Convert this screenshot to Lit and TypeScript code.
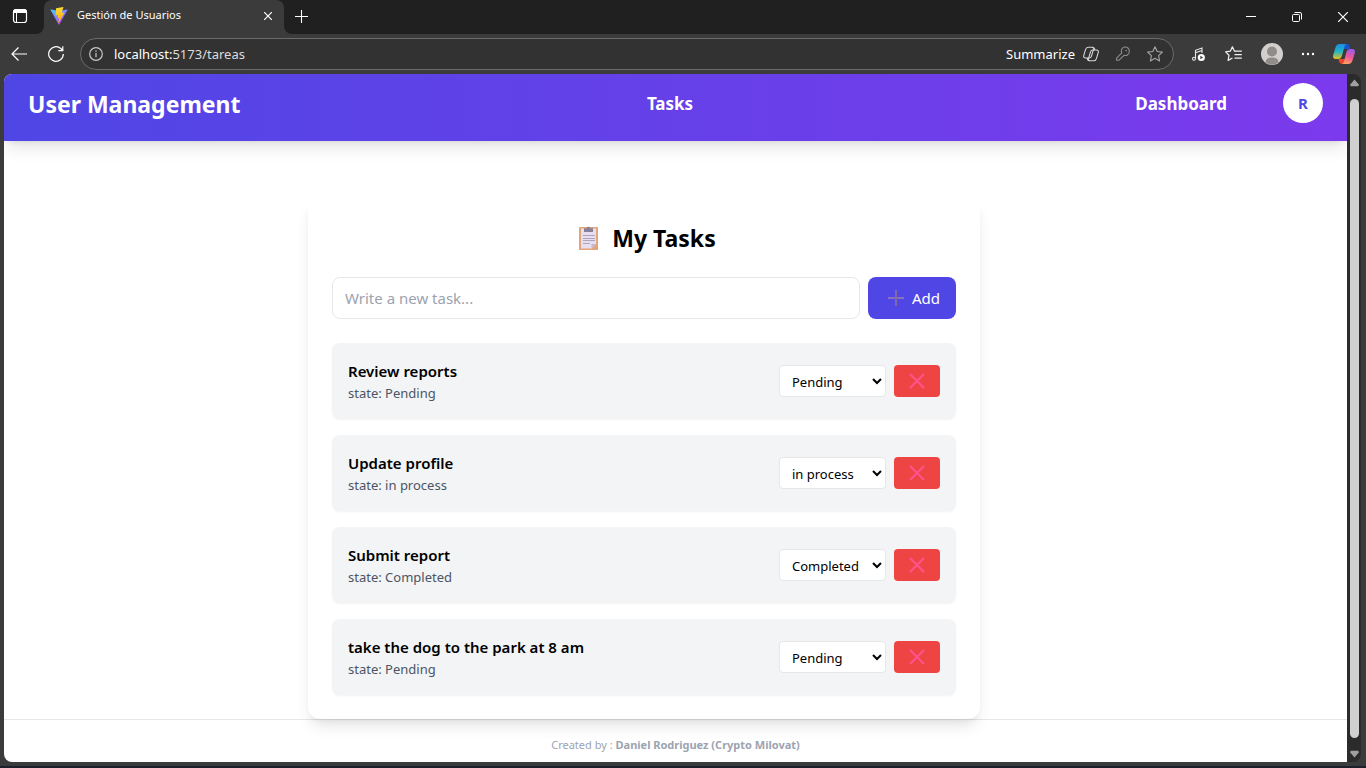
import { LitElement, html, svg, css } from "lit";
import { customElement, state } from "lit/decorators.js";

interface Task {
  id: number;
  title: string;
  status: string;
}

const STATUSES = ["Pending", "in process", "Completed"];

@customElement("browser-tabs")
class BrowserTabs extends LitElement {
  static styles = css`
    :host {
      display: flex;
      height: 34px;
      background: #202020;
      color: #fff;
      font-family: "Noto Sans", "Open Sans", sans-serif;
    }
    button {
      display: flex;
      align-items: center;
      justify-content: center;
      padding: 0;
      border: 0;
      background: none;
      color: inherit;
      font: inherit;
    }
    svg {
      display: block;
      flex: none;
    }
    .actions {
      width: 44px;
      padding: 0 4px 2px 0;
      box-sizing: border-box;
      border-radius: 0 0 8px 0;
    }
    .left,
    .right {
      display: flex;
      background: #3b3b3b;
    }
    .left .actions {
      background: #202020;
    }
    .tab {
      display: flex;
      align-items: center;
      width: 240px;
      padding: 0 8px 2px 6px;
      box-sizing: border-box;
      gap: 9px;
      background: #3b3b3b;
      border-radius: 8px 8px 0 0;
      font-size: 11px;
    }
    .corner {
      background: #202020;
      display: flex;
    }
    .title {
      flex: 1;
      line-height: 16px;
      padding-bottom: 2px;
    }
    .close {
      width: 16px;
      height: 16px;
    }
    .right {
      flex: 1;
    }
    .rest {
      flex: 1;
      display: flex;
      align-items: stretch;
      background: #202020;
      border-radius: 0 0 0 8px;
    }
    .new {
      width: 34px;
      padding-bottom: 2px;
    }
    .drag {
      flex: 1;
    }
    .win {
      width: 46px;
    }
  `;

  render() {
    return html`
      <div class="left">
        <button class="actions" aria-label="Tab actions">
          <svg width="16" height="16" viewBox="0 0 16 16" fill="none" stroke="#fff">
            <rect x="1.5" y="1.5" width="13" height="13" rx="2.5" stroke-width="1.2" />
            <path d="M1.5 4.5V4a2.5 2.5 0 0 1 2.5-2.5h8A2.5 2.5 0 0 1 14.5 4v.5z" fill="#fff" />
            <path d="M4.5 4.5v10" />
          </svg>
        </button>
      </div>
      <div class="corner">
        <div class="tab">
          <svg width="18" height="18" viewBox="0 0 32 32">
            <defs>
              <linearGradient id="a" x1="0" y1="0" x2=".7" y2="1">
                <stop stop-color="#41d1ff" />
                <stop offset="1" stop-color="#bd34fe" />
              </linearGradient>
              <linearGradient id="b" x1="0" y1="0" x2="0" y2="1">
                <stop stop-color="#ffdd35" />
                <stop offset="1" stop-color="#ffa800" />
              </linearGradient>
            </defs>
            <path d="M31 5.5 16.7 31a.8.8 0 0 1-1.400 0L1 5.5a.8.8 0 0 1 .8-1.2L16 6.9l14.2-2.600a.8.8 0 0 1 .8 1.200z" fill="url(#a)" />
            <path d="M23.500 0 11 2.400a.4.4 0 0 0-.3.4l-.9 12c0 .3.2.5.5.4l3.500-.8c.3 0 .5.2.4.5l-1.100 5c0 .3.2.5.5.4l2.200-.6c.3 0 .5.2.5.5l-1.700 7.800c-.1.4.5.6.7.3L25.500 10.200a.4.4 0 0 0-.4-.6l-3.700.7a.4.4 0 0 1-.4-.5L23.900.5a.4.4 0 0 0-.4-.5z" fill="url(#b)" />
          </svg>
          <span class="title">Gestión de Usuarios</span>
          <button class="close" aria-label="Close tab">
            <svg width="8" height="8" viewBox="0 0 8 8" stroke="#fff" stroke-width="1.2">
              <path d="M0 0l8 8M8 0L0 8" />
            </svg>
          </button>
        </div>
      </div>
      <div class="right">
        <div class="rest">
          <button class="new" aria-label="New tab">
            <svg width="13" height="13" viewBox="0 0 13 13" stroke="#fff" stroke-width="1.1">
              <path d="M6.5 0v13M0 6.5h13" />
            </svg>
          </button>
          <span class="drag"></span>
          <button class="win" aria-label="Minimize">
            <svg width="10" height="10" stroke="#fff"><path d="M0 4.5h10" /></svg>
          </button>
          <button class="win" aria-label="Restore">
            <svg width="10" height="10" viewBox="0 0 10 10" fill="none" stroke="#fff">
              <rect x=".5" y="2.5" width="7" height="7" rx="1" />
              <path d="M2.5.5H8A1.5 1.5 0 0 1 9.5 2v5.5" />
            </svg>
          </button>
          <button class="win" aria-label="Close window">
            <svg width="10" height="10" viewBox="0 0 10 10" stroke="#fff" stroke-width="1.2">
              <path d="M0 0l10 10M10 0L0 10" />
            </svg>
          </button>
        </div>
      </div>
    `;
  }
}

@customElement("browser-toolbar")
class BrowserToolbar extends LitElement {
  static styles = css`
    :host {
      display: flex;
      align-items: center;
      height: 40px;
      background: #3b3b3b;
      color: #fff;
      font-family: "Noto Sans", "Open Sans", sans-serif;
      font-size: 13px;
    }
    button {
      display: flex;
      align-items: center;
      justify-content: center;
      padding: 0;
      border: 0;
      background: none;
      color: inherit;
      font: inherit;
    }
    svg {
      display: block;
      flex: none;
    }
    .nav {
      width: 36px;
    }
    .nav:first-child {
      width: 38px;
    }
    .bar {
      flex: 1;
      display: flex;
      align-items: center;
      height: 32px;
      margin-left: 6px;
      padding: 0 10px 0 8px;
      box-sizing: border-box;
      border: 1px solid #6b6b6b;
      border-radius: 16px;
      background: #323232;
    }
    .url {
      flex: 1;
      padding-left: 11px;
      color: #dcdcdc;
    }
    .host {
      color: #fff;
    }
    .summarize {
      gap: 8px;
    }
    .tools {
      display: flex;
      gap: 16px;
    }
    .side {
      display: flex;
      align-items: center;
      justify-content: space-between;
      width: 192px;
      padding: 0 11px 0 17px;
      box-sizing: border-box;
    }
  `;

  private copilotLine() {
    return svg`<g fill="none" stroke="#d6d6d6" stroke-width="1.1" stroke-linejoin="round">
      <path d="M5.2 1.2h4.300c1 0 1.400.7 1.100 1.800L8.400 10.300c-.4 1.200-1 1.700-2.200 1.700H2.600C.9 12 .3 10.900.8 9.300l1.700-5.600C3 2 3.800 1.200 5.200 1.200z" />
      <path d="M10.800 14.800H6.500c-1 0-1.400-.7-1.100-1.800l2.200-7.300C8 4.500 8.600 4 9.800 4h3.600c1.700 0 2.300 1.100 1.800 2.700l-1.700 5.600c-.5 1.700-1.300 2.500-2.700 2.500z" />
      <path d="M9.500 1.200c1.300 0 1.600.5 2 1.500l.4 1.300M6.500 14.800c-1.300 0-1.600-.5-2-1.500L4.100 12" />
    </g>`;
  }

  render() {
    return html`
      <button class="nav" aria-label="Back">
        <svg width="16" height="14" viewBox="0 0 16 14" fill="none" stroke="#fff" stroke-width="1.2">
          <path d="M16 7H1M7.5.5 1 7l6.5 6.5" />
        </svg>
      </button>
      <button class="nav" aria-label="Refresh">
        <svg width="16" height="16" viewBox="0 0 16 16" fill="none" stroke="#fff" stroke-width="1.2">
          <path d="M15.3 8A7.3 7.3 0 1 1 12.800 2.500L14.700 4.500M14.800.2v4.500h-4.500" />
        </svg>
      </button>
      <div class="bar">
        <svg width="14" height="14" viewBox="0 0 14 14" fill="none" stroke="#c8c8c8" stroke-width="1.2">
          <circle cx="7" cy="7" r="6.3" />
          <path d="M7 6v4.2M7 3.6v1.3" />
        </svg>
        <span class="url"><span class="host">localhost:</span>5173/tareas</span>
        <div class="tools">
          <button class="summarize">
            Summarize
            <svg width="16" height="16" viewBox="0 0 16 16">${this.copilotLine()}</svg>
          </button>
          <button aria-label="Passwords">
            <svg width="16" height="16" viewBox="0 0 16 16" fill="none" stroke="#8c8c8c" stroke-width="1.1" stroke-linejoin="round">
              <path d="M14.300 5.300a4 4 0 0 1-5.300 4L3.800 14.300H1.600v-2.200L6.800 6.900A4 4 0 1 1 14.300 5.300z" />
              <circle cx="11.200" cy="4.600" r=".8" fill="#8c8c8c" stroke="none" />
            </svg>
          </button>
          <button aria-label="Add to favorites">
            <svg width="16" height="16" viewBox="0 0 16 16" fill="none" stroke="#a6a6a6" stroke-width="1.1" stroke-linejoin="round">
              <path d="M8 .8l2.200 4.700 5.200.6-3.800 3.600 1 5.200L8 12.300l-4.600 2.600 1-5.200L.6 6.100l5.200-.6z" />
            </svg>
          </button>
        </div>
      </div>
      <div class="side">
        <button aria-label="Media">
          <svg width="16" height="16" viewBox="0 0 16 16" fill="none" stroke="#e8e8e8" stroke-width="1.1">
            <path d="M4.500 12.500V4.300l6.500-2.300v5M4.500 6.800l6.500-2.300" />
            <circle cx="3" cy="12.700" r="1.500" />
            <circle cx="10.300" cy="11.500" r="3.600" fill="#fff" stroke="none" />
            <path d="M9.300 9.700v3.600l2.800-1.800z" fill="#3b3b3b" stroke="none" />
          </svg>
        </button>
        <button aria-label="Favorites">
          <svg width="17" height="16" viewBox="0 0 17 16" fill="none" stroke="#f0f0f0" stroke-width="1.2" stroke-linejoin="round">
            <path d="M10.800 5.300 9.500 5.200 7.400.8 5.300 5.200.6 5.900 4 9.200l-.9 5.200L7.500 12M9.800 5.200h7M9.500 8.700h7.300M9.500 12.200h7.300" />
          </svg>
        </button>
        <button aria-label="Profile">
          <svg width="22" height="22" viewBox="0 0 22 22">
            <circle cx="11" cy="11" r="11" fill="#d2d0ce" />
            <circle cx="11" cy="8.5" r="5" fill="#8f8c8a" />
            <path d="M4.500 19.500Q4.500 14.500 11 14.500t6.500 5A11 11 0 0 1 4.500 19.500z" fill="#8f8c8a" />
          </svg>
        </button>
        <button aria-label="Settings and more">
          <svg width="14" height="4" viewBox="0 0 14 4" fill="#fff">
            <circle cx="2" cy="2" r="1.2" /><circle cx="7" cy="2" r="1.2" /><circle cx="12" cy="2" r="1.2" />
          </svg>
        </button>
        <button aria-label="Copilot">
          <svg width="22" height="20" viewBox="0 0 22 20">
            <defs>
              <linearGradient id="l" x1="0" y1="0" x2="0" y2="1">
                <stop stop-color="#1a8fe8" /><stop offset=".5" stop-color="#23b4c4" /><stop offset="1" stop-color="#e6c21c" />
              </linearGradient>
              <linearGradient id="r" x1=".6" y1="0" x2=".3" y2="1">
                <stop stop-color="#9a5be8" /><stop offset=".5" stop-color="#f0569a" /><stop offset="1" stop-color="#ffa35c" />
              </linearGradient>
            </defs>
            <path d="M11 0h3c1.500 0 2 1 2.500 2.500l.8 2.500H13L9.500 5z" fill="#1753cf" />
            <path d="M5.500 15 6 17.500C6.500 19 7.500 20 9 20h2.500l2-5z" fill="#e8442e" />
            <path d="M6.500 0H14c-1.500 0-2 1-2.500 2.500L9 11.500C8.300 14 7.300 15 5 15H2.500C.4 15-.4 13.500.2 11L2.500 3.500C3.200 1.200 4.300 0 6.500 0z" fill="url(#l)" />
            <path d="M15.500 20H8.500c1.500 0 2-1 2.500-2.500L13.300 8.500C14 6 15 5 17.200 5h2.300c2.100 0 2.900 1.500 2.300 4l-2.300 7.500c-.7 2.300-1.800 3.500-4 3.500z" fill="url(#r)" />
          </svg>
        </button>
      </div>
    `;
  }
}

@customElement("site-header")
class SiteHeader extends LitElement {
  static styles = css`
    :host {
      display: grid;
      grid-template-columns: 7fr auto 5fr auto;
      align-items: center;
      padding: 9px 24px 18px;
      background: linear-gradient(to right, #4f46e5, #7c3aed);
      box-shadow: 0 10px 15px -3px rgb(0 0 0 / 0.1), 0 4px 6px -4px rgb(0 0 0 / 0.1);
      color: #fff;
      font-weight: 700;
    }
    .brand,
    a {
      padding-top: 2px;
    }
    .brand {
      min-width: 0;
      width: 0;
      white-space: nowrap;
      font-size: 23px;
      line-height: 32px;
    }
    a {
      color: inherit;
      text-decoration: none;
      font-size: 17px;
      line-height: 28px;
    }
    .user {
      grid-column: 4;
      display: flex;
      align-items: center;
      gap: 56px;
    }
    .avatar {
      width: 40px;
      height: 40px;
      padding: 0;
      border: 0;
      border-radius: 50%;
      background: #fff;
      color: #4f46e5;
      font: inherit;
      font-size: 15px;
    }
  `;

  render() {
    return html`
      <div class="brand">User Management</div>
      <a href="#tareas">Tasks</a>
      <div class="user">
        <a href="#dashboard">Dashboard</a>
        <button class="avatar" aria-label="Account">R</button>
      </div>
    `;
  }
}

@customElement("task-board")
class TaskBoard extends LitElement {
  static styles = css`
    :host {
      display: block;
      width: 100%;
      max-width: 672px;
      padding: 24px;
      box-sizing: border-box;
      border-radius: 12px;
      background: #fff;
      box-shadow: 0 10px 15px -3px rgb(0 0 0 / 0.1), 0 4px 6px -4px rgb(0 0 0 / 0.1);
    }
    h2 {
      display: flex;
      align-items: center;
      justify-content: center;
      gap: 12px;
      margin: 0 0 22px;
      padding-left: 6px;
      font-size: 23px;
      line-height: 34px;
      font-weight: 700;
    }
    svg {
      display: block;
      flex: none;
    }
    form {
      display: flex;
      gap: 8px;
      margin: 0 0 24px;
    }
    input {
      flex: 1;
      min-width: 0;
      height: 42px;
      padding: 0 12px;
      box-sizing: border-box;
      border: 1px solid #e5e7eb;
      border-radius: 8px;
      font: inherit;
      font-size: 15px;
    }
    input::placeholder {
      color: #9ca3af;
      opacity: 1;
    }
    button {
      display: flex;
      align-items: center;
      justify-content: center;
      border: 0;
      padding: 0;
      color: #fff;
      font: inherit;
    }
    .add {
      gap: 8px;
      width: 88px;
      padding-left: 4px;
      border-radius: 8px;
      background: #4f46e5;
      font-size: 15px;
    }
    ul {
      display: grid;
      gap: 16px;
      margin: 0;
      padding: 0;
      list-style: none;
    }
    li {
      display: flex;
      align-items: center;
      gap: 8px;
      padding: 16px;
      border-radius: 8px;
      background: #f3f4f6;
      box-shadow: 0 1px 2px rgb(0 0 0 / 0.05);
    }
    .text {
      flex: 1;
      min-width: 0;
    }
    p {
      margin: 0;
    }
    .name {
      font-size: 15px;
      line-height: 24px;
      font-weight: 600;
    }
    .status {
      color: #4b5563;
      font-size: 13px;
      line-height: 20px;
    }
    select {
      width: 107px;
      height: 32px;
      padding: 2px 0 0 8px;
      box-sizing: border-box;
      border: 1px solid #e5e7eb;
      border-radius: 4px;
      background-color: #fff;
      color: #000;
      font: inherit;
      font-size: 13px;
    }
    .delete {
      width: 46px;
      height: 32px;
      border-radius: 4px;
      background: #ef4444;
    }
  `;

  @state() private tasks: Task[] = [
    { id: 1, title: "Review reports", status: "Pending" },
    { id: 2, title: "Update profile", status: "in process" },
    { id: 3, title: "Submit report", status: "Completed" },
    { id: 4, title: "take the dog to the park at 8 am", status: "Pending" },
  ];

  private add(event: Event) {
    event.preventDefault();
    const field = this.renderRoot.querySelector("input")!;
    const title = field.value.trim();
    if (!title) return;
    this.tasks = [...this.tasks, { id: Date.now(), title, status: "Pending" }];
    field.value = "";
  }

  private setStatus(id: number, event: Event) {
    const status = (event.target as HTMLSelectElement).value;
    this.tasks = this.tasks.map((t) => (t.id === id ? { ...t, status } : t));
  }

  private remove(id: number) {
    this.tasks = this.tasks.filter((t) => t.id !== id);
  }

  render() {
    return html`
      <h2>
        <svg width="22" height="26" viewBox="0 0 22 26">
          <rect x="1" y="2" width="19" height="23" rx=".6" fill="#e5a57a" />
          <path d="M3 3.500h15V19l-4.500 4.500H3z" fill="#e6dff0" />
          <path d="M18 19h-4.500v4.500z" fill="#c4b8d6" />
          <path d="M6 3.200h2.600a2 2 0 0 1 3.800 0H15V7H6z" fill="#8a8094" />
          <path d="M5 10.500h12M5 13.500h12M5 15.500h12M5 18.500h7" stroke="#aea4be" />
        </svg>
        My Tasks
      </h2>
      <form @submit=${this.add}>
        <input type="text" placeholder="Write a new task..." aria-label="New task" />
        <button class="add" type="submit">
          <svg width="16" height="16" viewBox="0 0 16 16" stroke-width="2">
            <path d="M0 8h16" stroke="#8a70bc" />
            <path d="M8 0v16" stroke="#7f68a6" />
          </svg>
          Add
        </button>
      </form>
      <ul>
        ${this.tasks.map(
          (task) => html`
            <li>
              <div class="text">
                <p class="name">${task.title}</p>
                <p class="status">state: ${task.status}</p>
              </div>
              <select aria-label="State of ${task.title}" @change=${(e: Event) => this.setStatus(task.id, e)}>
                ${STATUSES.map((s) => html`<option ?selected=${s === task.status}>${s}</option>`)}
              </select>
              <button class="delete" aria-label="Delete ${task.title}" @click=${() => this.remove(task.id)}>
                <svg width="16" height="16" viewBox="0 0 16 16" stroke="#ff5290" stroke-width="2">
                  <path d="M1 1l14 14M15 1L1 15" />
                </svg>
              </button>
            </li>
          `,
        )}
      </ul>
    `;
  }
}

@customElement("app-root")
class AppRoot extends LitElement {
  static styles = css`
    :host {
      display: flex;
      flex-direction: column;
      height: 100vh;
      background: #3b3b3b;
      font-family: "Noto Sans", "Open Sans", sans-serif;
      color: #000;
    }
    .window {
      flex: 1;
      min-height: 0;
      display: flex;
      margin: 0 5px 0 4px;
      border-radius: 8px;
      overflow: hidden;
      background: #2b2b2b;
    }
    .page {
      flex: 1;
      min-width: 0;
      display: flex;
      flex-direction: column;
      overflow: hidden;
      background: #fff;
    }
    main {
      display: flex;
      justify-content: center;
      padding: 56px 63px 0 0;
    }
    footer {
      flex: 1;
      padding: 16px;
      border-top: 1px solid #e5e7eb;
      color: #9ca3af;
      font-size: 11px;
      line-height: 18px;
      text-align: center;
    }
    task-board {
      z-index: 1;
    }
    .scroll {
      display: flex;
      flex-direction: column;
      align-items: center;
      justify-content: space-between;
      gap: 12px;
      width: 14px;
      padding: 5px 0 4px 1px;
      box-sizing: border-box;
    }
    .thumb {
      flex: 1;
      width: 9px;
      border-radius: 5px;
      background: #d0d0d0;
    }
    .edge {
      height: 2px;
      margin-top: 4px;
      background: #1d1f2b;
    }
    svg {
      display: block;
      flex: none;
    }
  `;

  render() {
    return html`
      <browser-tabs></browser-tabs>
      <browser-toolbar></browser-toolbar>
      <div class="window">
        <div class="page">
          <site-header></site-header>
          <main><task-board></task-board></main>
          <footer>Created by : <strong>Daniel Rodriguez (Crypto Milovat)</strong></footer>
        </div>
        <div class="scroll">
          <svg width="9" height="8" viewBox="0 0 10 8"><path d="M5 0l5 6-1 1.500H1L0 6z" fill="#a0a0a0" /></svg>
          <div class="thumb"></div>
          <svg width="9" height="8" viewBox="0 0 10 8"><path d="M5 8l5-6-1-1.500H1L0 2z" fill="#a0a0a0" /></svg>
        </div>
      </div>
      <div class="edge"></div>
    `;
  }
}
